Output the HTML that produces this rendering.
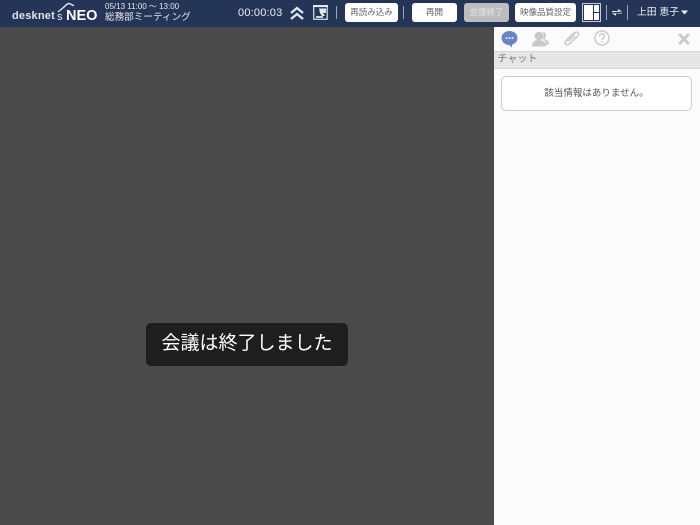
<!DOCTYPE html>
<html lang="ja"><head><meta charset="utf-8">
<style>
html,body{margin:0;padding:0}
body{width:700px;height:525px;position:relative;overflow:hidden;background:#4a4a4a;font-family:"Liberation Sans","Noto Sans CJK JP",sans-serif}
.a{position:absolute;white-space:nowrap}
#top{left:0;top:0;width:700px;height:27px;background:#243558}
.btn{position:absolute;top:3px;height:19px;background:#fff;border-radius:3px;color:#666;font-size:8.5px;line-height:19px;text-align:center}
.sep{position:absolute;top:6px;width:1px;height:13px;background:#9aa5b8}
#side{left:494px;top:27px;width:206px;height:498px;background:#fbfbfb}
</style></head><body>
<div class="a" id="top">
<div class="a" style="left:12px;top:10px;font-size:11px;font-weight:bold;color:#dfe4ee;letter-spacing:.2px">desknet</div>
<div class="a" style="left:57px;top:11px;font-size:11px;color:#e8ecf3">s</div>
<div class="a" style="left:66px;top:8px;font-size:14.5px;font-weight:bold;color:#fff">NEO</div>
<svg class="a" style="left:56px;top:1px" width="20" height="14" fill="none" stroke="#e2e7f0" stroke-width="1.4"><path d="M2 11C4 9 6 8 8 6C10 4 11 2.500 13 2.500C15 2.500 15 4 18 4.500"/></svg>
<div class="a" style="left:105px;top:2px;font-size:8px;line-height:10px;color:#e8e8e8">05/13 11:00 ～ 13:00</div>
<div class="a" style="left:105px;top:11px;font-size:9.6px;line-height:13px;color:#e8e8e8">総務部ミーティング</div>
<div class="a" style="left:238px;top:6px;font-size:11px;line-height:14px;color:#f0f0f0;letter-spacing:.2px">00:00:03</div>
<svg class="a" style="left:290px;top:6px" width="14" height="14" fill="none" stroke="#dfe5ee" stroke-width="2.400"><path d="M1 7L7 2L13 7M1 13L7 8L13 13"/></svg>
<svg class="a" style="left:313px;top:5px" width="15" height="15"><rect x=".7" y="1.500" width="13.500" height="12.800" fill="none" stroke="#dfe4ec" stroke-width="1.200"/><rect x="0" y="0" width="15" height="2" fill="#e4e8ef"/><path d="M6 3.500L13 3.500L13 8L10 8L12 11L9 11L7 8z" fill="#e4e8ef"/><rect x="3" y="11" width="7" height="2" fill="#c8cfdb"/></svg>
<div class="sep" style="left:336px"></div>
<div class="btn" style="left:345px;width:53px">再読み込み</div>
<div class="sep" style="left:403px"></div>
<div class="btn" style="left:412px;width:45px">再開</div>
<div class="btn" style="left:464px;width:45px;background:#bdbdbd;color:#e6e6e6">会議終了</div>
<div class="btn" style="left:515px;width:61px">映像品質設定</div>
<svg class="a" style="left:582px;top:3px" width="19" height="19"><rect x=".5" y=".5" width="18" height="18" fill="#243558" stroke="#c4ccdb"/><rect x="2" y="2" width="9" height="15" fill="#fff"/><rect x="12" y="2" width="5" height="7" fill="#fff"/><rect x="12" y="10" width="5" height="7" fill="#fff"/></svg>
<div class="sep" style="left:606px;top:5px;height:15px"></div>
<svg class="a" style="left:612px;top:8px" width="10" height="9" fill="#f0f0f0"><path d="M0 3H6V1L10 3.500L0 4.200zM10 5.500H4V7.800L0 5.500L10 4.800z"/></svg>
<div class="sep" style="left:627px;top:5px;height:15px"></div>
<div class="a" style="left:637px;top:6px;font-size:9.800px;line-height:14px;color:#f2f2f2">上田 恵子</div>
<svg class="a" style="left:681px;top:10px" width="7" height="5"><path d="M0 .5H7L3.500 4.500z" fill="#f2f2f2"/></svg>
</div>
<div class="a" id="side">
<svg class="a" style="left:7px;top:3px" width="17" height="18"><ellipse cx="8.500" cy="8" rx="8" ry="7" fill="#6a83c5"/><path d="M6 13L11 17.500L11 13z" fill="#6a83c5"/><circle cx="5.500" cy="8" r="1" fill="#e8ecf6"/><circle cx="8.500" cy="8" r="1" fill="#e8ecf6"/><circle cx="11.500" cy="8" r="1" fill="#e8ecf6"/></svg>
<svg class="a" style="left:38px;top:3px" width="17" height="17" fill="#c9c9c9"><circle cx="7" cy="6" r="4.300"/><path d="M0 16.500c0-5 3-6.500 7-6.500s7 2 7 6.500z"/><path d="M10 1.500a4 4 0 0 1 2 7.500c2.500.5 5 2 5 5.500h-3c0-3-2-5-3.500-5.500a6 6 0 0 0 0-7.500z"/></svg>
<svg class="a" style="left:69px;top:3px" width="17" height="17" fill="none" stroke="#c9c9c9" stroke-width="1.500"><path d="M12.500 2.500L2.800 11c-2.300 2.300 1 5.300 3.200 3.200L15 6c2-2-1-5.300-3.500-3.300L5 8.500c-1 1.200.5 2.700 1.700 1.700L12 5.500"/></svg>
<svg class="a" style="left:100px;top:3px" width="16" height="16" fill="none" stroke="#c9c9c9" stroke-width="1.400"><circle cx="8" cy="8" r="7"/><path d="M5.500 6.200c0-3.200 5-3.200 5 0 0 2-2.500 2-2.500 4"/><path d="M8 11.200v1.600"/></svg>
<svg class="a" style="left:184px;top:6px" width="12" height="12" stroke="#c9c9c9" stroke-width="2.800"><path d="M1 1L11 11M11 1L1 11"/></svg>
<div class="a" style="left:0;top:24px;width:206px;height:18px;background:#e6e6e6;border-top:1px solid #d8d8d8;border-bottom:1px solid #d8d8d8;box-sizing:border-box;color:#777;font-size:10px;line-height:15px;padding-left:3.500px">チャット</div>
<div class="a" style="left:7px;top:49px;width:191px;height:35px;box-sizing:border-box;border:1px solid #c6ced8;border-radius:5px;background:#fff;color:#555;font-size:9.500px;line-height:33px;text-align:center">該当情報はありません。</div>
</div>
<div class="a" style="left:146px;top:323px;width:202px;height:43px;background:#1e1e1e;border-radius:5px;color:#fff;font-size:19px;line-height:42px;text-align:center">会議は終了しました</div>
</body></html>
